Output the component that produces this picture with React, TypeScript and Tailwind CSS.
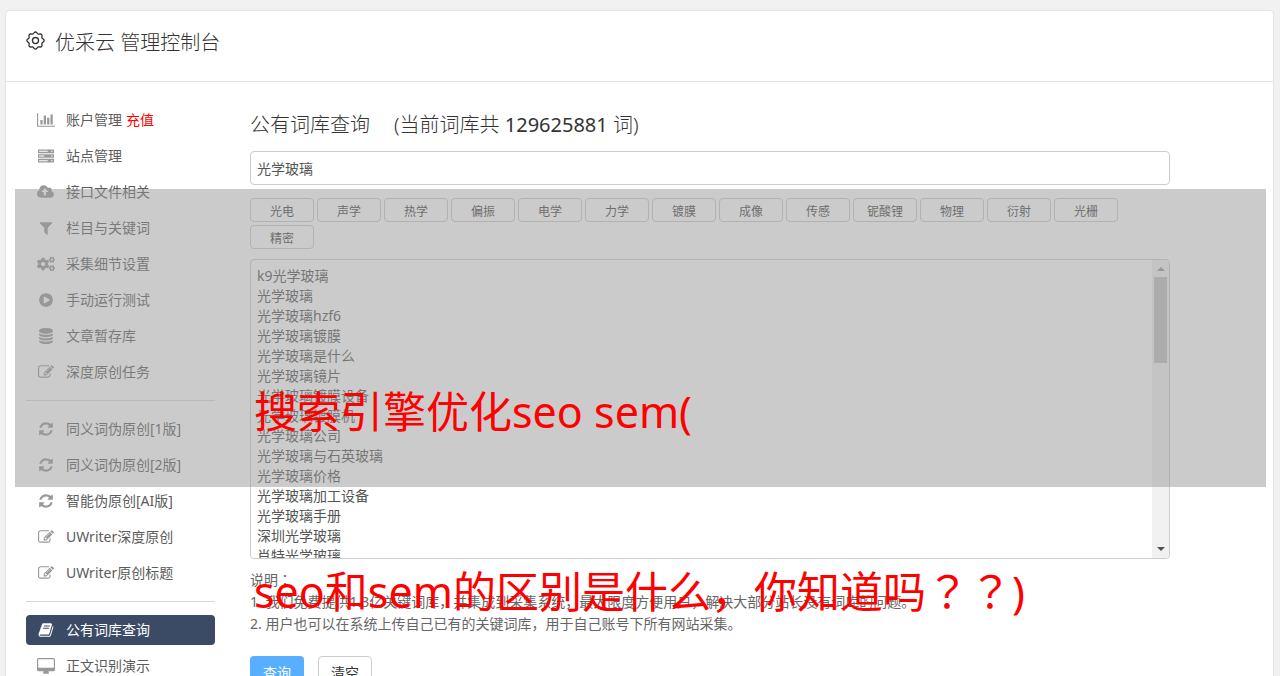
import { FaCogs } from "react-icons/fa";
import type { ReactNode } from "react";

function Glyph({ wide, children }: { wide?: boolean; children: ReactNode }) {
  return (
    <svg
      viewBox={wide ? "0 0 2048 1792" : "0 0 1792 1792"}
      className={wide ? "h-4 w-[18px]" : "h-4 w-4"}
      fill="currentColor"
      aria-hidden="true"
    >
      {children}
    </svg>
  );
}

const chartIcon = (
  <Glyph wide>
    <path d="M640 896v512h-256v-512h256zm384-512v1024h-256v-1024h256zm1024 1152v128h-2048v-1536h128v1408h1920zm-640-896v768h-256v-768h256zm384-384v1152h-256v-1152h256z" />
  </Glyph>
);

const serverIcon = (
  <Glyph>
    <path
      fillRule="evenodd"
      d="M0 160h1792v416H0zM128 320v96h960V320zM1472 304v128h160V304zM0 688h1792v416H0zM128 848v96h576V848zM1472 832v128h160V832zM0 1216h1792v416H0zM128 1376v96h960v-96zM1472 1360v128h160v-128z"
    />
  </Glyph>
);

const cloudIcon = (
  <Glyph wide>
    <path d="M1280 864q0-14-9-23l-352-352q-9-9-23-9t-23 9l-351 351q-10 12-10 24 0 14 9 23t23 9h224v352q0 13 9.5 22.5t22.5 9.5h192q13 0 22.5-9.5t9.5-22.5v-352h224q13 0 22.5-9.5t9.5-22.5zm640 288q0 159-112.5 271.5t-271.5 112.5h-1088q-185 0-316.5-131.5t-131.5-316.5q0-130 70-240t188-165q-2-30-2-43 0-212 150-362t362-150q156 0 285.5 87t188.5 231q71-62 166-62 106 0 181 75t75 181q0 76-41 138 130 31 213.5 135.5t83.5 238.5z" />
  </Glyph>
);

const filterIcon = (
  <Glyph>
    <path d="M1595 295q17 41-14 70l-493 493v742q0 42-39 59-13 5-25 5-27 0-45-19l-256-256q-19-19-19-45v-486l-493-493q-31-29-14-70 17-39 59-39h1280q42 0 59 39z" />
  </Glyph>
);

const playIcon = (
  <Glyph>
    <path d="M896 128q209 0 385.5 103t279.5 279.5 103 385.5-103 385.5-279.5 279.5-385.5 103-385.5-103-279.5-279.5-103-385.5 103-385.5 279.5-279.5 385.5-103zm384 823q32-18 32-55t-32-55l-544-320q-31-19-64-1-32 19-32 56v640q0 37 32 56 16 8 32 8 17 0 32-9z" />
  </Glyph>
);

const databaseIcon = (
  <Glyph>
    <path d="M896 768q237 0 443-43t325-127v170q0 69-103 128t-280 93.5-385 34.5-385-34.5-280-93.5-103-128v-170q119 84 325 127t443 43zm0 768q237 0 443-43t325-127v170q0 69-103 128t-280 93.5-385 34.5-385-34.5-280-93.5-103-128v-170q119 84 325 127t443 43zm0-384q237 0 443-43t325-127v170q0 69-103 128t-280 93.5-385 34.5-385-34.5-280-93.5-103-128v-170q119 84 325 127t443 43zm0-1152q208 0 385 34.5t280 93.5 103 128v128q0 69-103 128t-280 93.5-385 34.5-385-34.5-280-93.5-103-128v-128q0-69 103-128t280-93.5 385-34.5z" />
  </Glyph>
);

const editIcon = (
  <Glyph>
    <path d="M888 1184l116-116-152-152-116 116v56h96v96h56zm440-720q-16-16-33 1l-350 350q-17 17-1 33t33-1l350-350q17-17 1-33zm80 594v190q0 119-84.5 203.5t-203.5 84.5h-832q-119 0-203.5-84.5t-84.5-203.5v-832q0-119 84.5-203.5t203.5-84.5h832q63 0 117 25 15 7 18 23 3 17-9 29l-49 49q-14 14-32 8-23-6-45-6h-832q-66 0-113 47t-47 113v832q0 66 47 113t113 47h832q66 0 113-47t47-113v-126q0-13 9-22l64-64q15-15 35-7t20 29zm-96-738l288 288-672 672h-288v-288zm444 132l-92 92-288-288 92-92q28-28 68-28t68 28l152 152q28 28 28 68t-28 68z" />
  </Glyph>
);

const refreshIcon = (
  <Glyph>
    <path d="M1639 1056q0 5-1 7-64 268-268 434.5t-478 166.5q-146 0-282.5-55t-243.5-157l-129 129q-19 19-45 19t-45-19-19-45v-448q0-26 19-45t45-19h448q26 0 45 19t19 45-19 45l-137 137q71 66 161 102t187 36q134 0 250-65t186-179q11-17 53-117 8-23 30-23h192q13 0 22.5 9.5t9.5 22.5zm25-800v448q0 26-19 45t-45 19h-448q-26 0-45-19t-19-45 19-45l138-138q-148-137-349-137-134 0-250 65t-186 179q-11 17-53 117-8 23-30 23h-199q-13 0-22.5-9.5t-9.5-22.5v-7q65-268 270-434.5t480-166.5q146 0 284 55.5t245 156.5l130-129q19-19 45-19t45 19 19 45z" />
  </Glyph>
);

const bookIcon = (
  <Glyph>
    <path d="M1703 478q40 57 18 129l-275 906q-19 64-76.5 107.5t-122.5 43.5h-923q-77 0-148.5-53.5t-99.5-131.5q-24-67-2-127 0-4 3-27t4-37q1-8-3-21.5t-3-19.5q2-11 8-21t16.5-23.5 16.5-23.5q23-38 45-91.5t30-91.5q3-10 .5-30t-.5-28q3-11 17-28t17-23q21-36 42-92t25-90q1-9-2.5-32t.5-28q4-13 22-30.5t22-22.5q19-26 42.5-84.5t27.5-96.5q1-8-3-25.5t-2-26.5q2-8 9-18t18-23 17-21q8-12 16.5-30.5t15-35 16-36 19.5-32 26.5-23.5 36-11.5 47.5 5.5l-1 3q38-9 51-9h761q74 0 114 56t18 130l-274 906q-36 119-71.5 153.5t-128.5 34.5h-869q-27 0-38 15-11 16-1 43 24 70 144 70h923q29 0 56-15.5t35-41.5l300-987q7-22 5-57 38 15 59 43zm-1064 2q-4 13 2 22.5t20 9.5h608q13 0 25.5-9.5t16.5-22.5l21-64q4-13-2-22.5t-20-9.5h-608q-13 0-25.5 9.5t-16.5 22.5zm-83 256q-4 13 2 22.5t20 9.5h608q13 0 25.5-9.5t16.5-22.5l21-64q4-13-2-22.5t-20-9.5h-608q-13 0-25.5 9.5t-16.5 22.5z" />
  </Glyph>
);

const desktopIcon = (
  <svg viewBox="-64 0 1920 1792" className="h-[17px] w-[18px]" fill="currentColor" aria-hidden="true">
    <path d="M1728 992v-832q0-13-9.5-22.5t-22.5-9.5h-1600q-13 0-22.5 9.5t-9.5 22.5v832q0 13 9.5 22.5t22.5 9.5h1600q13 0 22.5-9.5t9.5-22.5zm128-832v1088q0 66-47 113t-113 47h-544q0 37 16 77.5t32 71 16 43.5q0 26-19 45t-45 19h-512q-26 0-45-19t-19-45q0-14 16-44t32-70 16-78h-544q-66 0-113-47t-47-113v-1088q0-66 47-113t113-47h1600q66 0 113 47t47 113z" />
  </svg>
);

// Outline of an eight-lobed cog, sampled around its centre.
const gearPoints = Array.from({ length: 96 }, (_, i) => {
  const angle = (i / 96) * Math.PI * 2;
  const radius = 8.2 + 0.8 * Math.cos(8 * angle);
  return `${(10 + radius * Math.cos(angle)).toFixed(2)},${(10 + radius * Math.sin(angle)).toFixed(2)}`;
}).join(" ");

function GearIcon() {
  return (
    <svg viewBox="0 0 20 20" className="h-[19px] w-[19px]" fill="none" stroke="currentColor" strokeWidth="1.4" strokeLinejoin="round" aria-hidden="true">
      <polygon points={gearPoints} />
      <circle cx="10" cy="10" r="3.2" />
    </svg>
  );
}

type Item = { icon: ReactNode; label: string; extra?: string; active?: boolean };

const groups: Item[][] = [
  [
    { icon: chartIcon, label: "账户管理", extra: "充值" },
    { icon: serverIcon, label: "站点管理" },
    { icon: cloudIcon, label: "接口文件相关" },
    { icon: filterIcon, label: "栏目与关键词" },
    { icon: <FaCogs size={18} />, label: "采集细节设置" },
    { icon: playIcon, label: "手动运行测试" },
    { icon: databaseIcon, label: "文章暂存库" },
    { icon: editIcon, label: "深度原创任务" },
  ],
  [
    { icon: refreshIcon, label: "同义词伪原创[1版]" },
    { icon: refreshIcon, label: "同义词伪原创[2版]" },
    { icon: refreshIcon, label: "智能伪原创[AI版]" },
    { icon: editIcon, label: "UWriter深度原创" },
    { icon: editIcon, label: "UWriter原创标题" },
  ],
  [
    { icon: bookIcon, label: "公有词库查询", active: true },
    { icon: desktopIcon, label: "正文识别演示" },
  ],
];

const tags = ["光电", "声学", "热学", "偏振", "电学", "力学", "镀膜", "成像", "传感", "铌酸锂", "物理", "衍射", "光栅", "精密"];

const words = [
  "k9光学玻璃",
  "光学玻璃",
  "光学玻璃hzf6",
  "光学玻璃镀膜",
  "光学玻璃是什么",
  "光学玻璃镜片",
  "光学玻璃镀膜设备",
  "光学玻璃镀膜机",
  "光学玻璃公司",
  "光学玻璃与石英玻璃",
  "光学玻璃价格",
  "光学玻璃加工设备",
  "光学玻璃手册",
  "深圳光学玻璃",
  "肖特光学玻璃",
];

function Sidebar() {
  return (
    <nav className="w-[189px] shrink-0 divide-y divide-[#d8d8d8]">
      {groups.map((group, i) => (
        <ul key={i} className="flex flex-col gap-1.5 py-[13px] first:pt-0">
          {group.map((item) => (
            <li
              key={item.label}
              className={
                item.active
                  ? "flex h-[30px] items-center rounded bg-[#3b4b66] text-white"
                  : "flex h-[30px] items-center text-[#5c5c5c]"
              }
            >
              <a href="#" className="flex items-center">
                <span className={item.active ? "flex w-10 justify-center" : "flex w-10 justify-center text-[#999]"}>
                  {item.icon}
                </span>
                <span>{item.label}</span>
              </a>
              {item.extra && (
                <a href="#" className="ml-1 text-[#f00]">
                  {item.extra}
                </a>
              )}
            </li>
          ))}
        </ul>
      ))}
    </nav>
  );
}

function WordList() {
  return (
    <div className="relative mt-2.5">
      <textarea
        aria-label="词库结果"
        readOnly
        value={words.join("\n")}
        className="block h-[300px] w-full resize-none overflow-hidden rounded border border-[#ccc] bg-white px-1.5 py-1.5 text-sm leading-5 text-[#555] outline-none"
      />
      <div className="absolute inset-y-px right-px flex w-[17px] flex-col items-center justify-between rounded-r-sm bg-[#f1f1f1] pt-[7px] pb-[7px]" aria-hidden="true">
        <div className="flex flex-col items-center gap-1.5">
          <svg viewBox="0 0 8 4" className="h-1 w-2" fill="#999">
            <path d="M0 4L4 0L8 4Z" />
          </svg>
          <div className="h-[86px] w-[13px] bg-[#c1c1c1]" />
        </div>
        <svg viewBox="0 0 8 4" className="h-1 w-2" fill="#505050">
          <path d="M0 0L4 4L8 0Z" />
        </svg>
      </div>
    </div>
  );
}

export default function App() {
  return (
    <div className="relative h-screen overflow-hidden bg-[#f1f1f1] pt-2.5 pr-1.5 pl-[5px] font-['Noto_Sans','Noto_Sans_CJK_SC',sans-serif] text-sm text-[#555]">
      <div className="min-h-screen rounded border border-[#e4e4e4] bg-white">
        <header className="flex h-[71px] items-start gap-2.5 border-b border-[#e4e4e4] px-5 pt-5 text-[#333]">
          <GearIcon />
          <h1 className="text-xl leading-6 font-light">优采云 管理控制台</h1>
        </header>
        <div className="flex gap-[35px] pr-[103px] pl-5">
          <div className="pt-[23px]">
            <Sidebar />
          </div>
          <main className="min-w-0 flex-1 pt-7">
            <h2 className="flex gap-6 text-xl leading-[30px] font-light text-[#333]">
              <span>公有词库查询</span>
              <span>
                (当前词库共 <span className="font-normal">129625881</span> 词)
              </span>
            </h2>
            <input
              aria-label="关键词"
              defaultValue="光学玻璃"
              className="mt-[11px] block h-[34px] w-full rounded border border-[#ccc] px-1.5 text-sm outline-none"
            />
            <div className="mt-[13px] flex flex-wrap gap-[3px]">
              {tags.map((tag) => (
                <button key={tag} className="h-6 w-16 rounded border border-[#ccc] bg-white pt-1 text-xs text-[#444]">
                  {tag}
                </button>
              ))}
            </div>
            <WordList />
            <div className="mt-2.5 leading-[22px] text-[#666]">
              <p>
                说明<span className="font-['Noto_Sans_CJK_JP',sans-serif] leading-none">：</span>
              </p>
              <p>1. 我们免费提供1.3亿关键词库，并集成到采集系统，最大限度方便用户，解决大部分站长没有词库的问题。</p>
              <p>2. 用户也可以在系统上传自己已有的关键词库，用于自己账号下所有网站采集。</p>
            </div>
            <div className="mt-[21px] flex gap-3.5">
              <button className="h-[34px] w-[54px] rounded bg-[#58aeff] text-white">查询</button>
              <button className="h-[34px] w-[54px] rounded border border-[#ccc] bg-white text-[#333]">清空</button>
            </div>
          </main>
        </div>
      </div>
      <div className="pointer-events-none absolute top-[189px] right-3.5 left-[15px] h-[298px] bg-[#979797]/50" />
      <div className="pointer-events-none absolute top-[382px] left-[254px] text-[43px] leading-[60px] whitespace-nowrap text-[#f00]">
        <p>搜索引擎优化seo sem(</p>
        <p className="mt-[120px]">
          seo和sem的区别是什么，你知道吗<span className="font-['Noto_Sans_CJK_JP',sans-serif] leading-none">？？</span>)
        </p>
      </div>
    </div>
  );
}
